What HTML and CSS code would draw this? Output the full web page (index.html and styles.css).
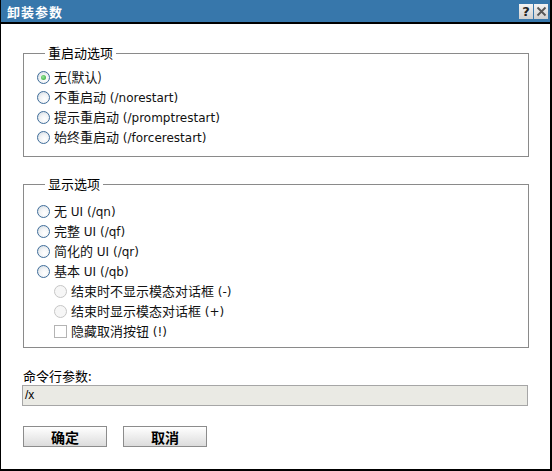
FILE: index.html
```html
<!DOCTYPE html>
<html lang="zh-CN">
<head>
<meta charset="utf-8">
<title>卸装参数</title>
<link rel="stylesheet" href="styles.css">
</head>
<body>
<div class="window">
  <div class="titlebar">
    <span class="title">卸装参数</span>
    <div class="tbtns">
      <span class="tbtn">?</span>
      <span class="tbtn"><svg width="11" height="11" viewBox="0 0 11 11"><path d="M1.5 1.5 L9.5 9.5 M9.5 1.5 L1.5 9.5" stroke="#555" stroke-width="1.8"/></svg></span>
    </div>
  </div>
  <div class="content">
    <fieldset class="group g1">
      <legend class="zh">重启动选项</legend>
      <label class="row"><span class="radio on"></span><span class="txt"><span class="zh">无(默认)</span></span></label>
      <label class="row"><span class="radio"></span><span class="txt"><span class="zh">不重启动</span> (/norestart)</span></label>
      <label class="row"><span class="radio"></span><span class="txt"><span class="zh">提示重启动</span> (/promptrestart)</span></label>
      <label class="row"><span class="radio"></span><span class="txt"><span class="zh">始终重启动</span> (/forcerestart)</span></label>
    </fieldset>
    <fieldset class="group g2">
      <legend class="zh">显示选项</legend>
      <label class="row"><span class="radio"></span><span class="txt"><span class="zh">无</span> UI (/qn)</span></label>
      <label class="row"><span class="radio"></span><span class="txt"><span class="zh">完整</span> UI (/qf)</span></label>
      <label class="row"><span class="radio"></span><span class="txt"><span class="zh">简化的</span> UI (/qr)</span></label>
      <label class="row"><span class="radio"></span><span class="txt"><span class="zh">基本</span> UI (/qb)</span></label>
      <label class="row sub"><span class="radio off"></span><span class="txt"><span class="zh">结束时不显示模态对话框</span> (-)</span></label>
      <label class="row sub"><span class="radio off"></span><span class="txt"><span class="zh">结束时显示模态对话框</span> (+)</span></label>
      <label class="row chk"><span class="check"></span><span class="txt"><span class="zh">隐藏取消按钮</span> (!)</span></label>
    </fieldset>
    <div class="cmdlabel zh">命令行参数:</div>
    <div class="cmdbox">/x</div>
    <div class="buttons">
      <span class="btn">确定</span>
      <span class="btn">取消</span>
    </div>
  </div>
</div>
</body>
</html>
```
FILE: styles.css
```css
html, body {
  margin: 0;
  padding: 0;
  background: #ffffff;
}
.window {
  width: 552px;
  height: 471px;
  box-sizing: border-box;
  border-left: 1px solid #000;
  border-right: 2px solid #000;
  border-bottom: 2px solid #000;
  background: #fff;
  font-family: "DejaVu Sans", "Noto Sans CJK SC", sans-serif;
  font-size: 12px;
  color: #000;
}
.zh {
  font-family: "Noto Sans CJK SC", sans-serif;
  font-size: 13px;
}
.titlebar {
  height: 22px;
  background: #3777ab;
  border-bottom: 2px solid #000;
  display: flex;
  align-items: center;
  justify-content: space-between;
  padding: 0 2px 0 6px;
}
.title {
  color: #fff;
  font-family: "Noto Sans CJK SC", sans-serif;
  font-weight: bold;
  font-size: 13px;
  letter-spacing: 1px;
}
.tbtns {
  display: flex;
  gap: 1px;
  margin-top: 1px;
}
.tbtn {
  width: 14px;
  height: 15px;
  background: linear-gradient(#f4f4f4, #cfcfcf);
  display: flex;
  align-items: center;
  justify-content: center;
  font-family: "DejaVu Sans", sans-serif;
  font-weight: bold;
  font-size: 13px;
  color: #222;
}
.content {
  padding: 21px 0 0 22px;
}
.group {
  width: 506px;
  box-sizing: border-box;
  margin: 0;
  border: 1px solid #8a8a8a;
  padding: 6px 0 9px 13px;
}
.group legend {
  margin-left: 8px;
  padding: 0 3px;
  line-height: 16px;
}
.g2 {
  margin-top: 19px;
  padding-top: 9px;
  padding-bottom: 6px;
}
.row {
  display: flex;
  align-items: center;
  height: 20px;
  white-space: pre;
}
.txt {
  line-height: 16px;
  color: #111;
}
.row .radio,
.row .check {
  margin-right: 4px;
}
.row.sub,
.row.chk {
  padding-left: 17px;
}
.radio {
  width: 11px;
  height: 11px;
  border-radius: 50%;
  border: 1px solid #3f6d9a;
  background: radial-gradient(circle at 60% 65%, #ffffff 0, #f2f4f6 45%, #c9d3dc 100%);
  display: flex;
  align-items: center;
  justify-content: center;
  flex: none;
}
.radio.on::after {
  content: "";
  width: 5px;
  height: 5px;
  border-radius: 50%;
  background: radial-gradient(circle at 40% 40%, #9be59b, #22a32c);
}
.radio.off {
  border-color: #c6c6c6;
  background: #f6f6f6;
}
.check {
  width: 11px;
  height: 11px;
  border: 1px solid #b4b4b4;
  background: #fff;
  flex: none;
}
.cmdlabel {
  margin-top: 20px;
  line-height: 16px;
}
.cmdbox {
  margin: 1px 0 0 -1px;
  width: 506px;
  height: 21px;
  box-sizing: border-box;
  border: 1px solid #a6a6a6;
  background: #eaeae4;
  font-family: "Liberation Sans", sans-serif;
  font-size: 12px;
  line-height: 19px;
  padding-left: 2px;
}
.buttons {
  margin-top: 20px;
  display: flex;
  gap: 16px;
}
.btn {
  width: 84px;
  height: 21px;
  box-sizing: border-box;
  border: 1px solid #8c8c8c;
  background: linear-gradient(#ffffff, #dcdcdc);
  display: flex;
  align-items: center;
  justify-content: center;
  font-family: "Noto Sans CJK SC", sans-serif;
  font-weight: bold;
  font-size: 14px;
}
```
